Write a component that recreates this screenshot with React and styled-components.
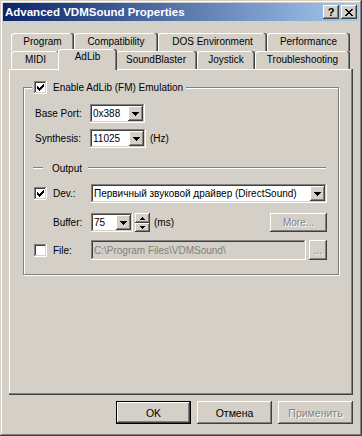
import React from 'react';
import styled, { createGlobalStyle } from 'styled-components';

const face = '#d4d0c8';

const GlobalStyle = createGlobalStyle`
  html, body {
    margin: 0;
    padding: 0;
    background: ${face};
  }
  body {
    font-family: "Liberation Sans", Arial, sans-serif;
    font-size: 10px;
    color: #000;
  }
  * {
    box-sizing: border-box;
  }
`;

const raised = `
  background: ${face};
  box-shadow: inset -1px -1px 0 #404040, inset 1px 1px 0 #fff, inset -2px -2px 0 #808080, inset 2px 2px 0 ${face};
`;

const sunken = `
  box-shadow: inset -1px -1px 0 #fff, inset 1px 1px 0 #808080, inset -2px -2px 0 ${face}, inset 2px 2px 0 #404040;
`;

const row1 = [
  ['Program', 63],
  ['Compatibility', 84],
  ['DOS Environment', 109],
  ['Performance', 83],
];

const row2 = [
  ['MIDI', 49],
  ['AdLib', 55, true],
  ['SoundBlaster', 82],
  ['Joystick', 58],
  ['Troubleshooting', 95],
];

const CheckMark = () => (
  <svg width="7" height="7" viewBox="0 0 7 7">
    <path d="M0 2h1v1h1v1h1V3h1V2h1V1h1V0h1v3H6v1H5v1H4v1H3v1H2V6H1V5H0z" fill="#000" />
  </svg>
);

const ArrowDown = () => (
  <svg width="7" height="4" viewBox="0 0 7 4">
    <path d="M0 0h7v1H6v1H5v1H4v1H3V3H2V2H1V1H0z" fill="#000" />
  </svg>
);

const SpinUp = () => (
  <svg width="5" height="3" viewBox="0 0 5 3">
    <path d="M2 0h1v1h1v1h1v1H0V2h1V1h1z" fill="#000" />
  </svg>
);

const SpinDown = () => (
  <svg width="5" height="3" viewBox="0 0 5 3">
    <path d="M0 0h5v1H4v1H3v1H2V2H1V1H0z" fill="#000" />
  </svg>
);

const CloseGlyph = () => (
  <svg width="8" height="7" viewBox="0 0 8 7">
    <path
      d="M0 0h2v1H0z M6 0h2v1H6z M1 1h2v1H1z M5 1h2v1H5z M2 2h4v1H2z M3 3h2v1H3z M2 4h4v1H2z M1 5h2v1H1z M5 5h2v1H5z M0 6h2v1H0z M6 6h2v1H6z"
      fill="#000"
    />
  </svg>
);

const Checkbox = ({ checked }) => <CheckBoxBox>{checked && <CheckMark />}</CheckBoxBox>;

const Combo = ({ width, value }) => (
  <ComboBox $w={width}>
    <ComboText>{value}</ComboText>
    <DropButton>
      <ArrowDown />
    </DropButton>
  </ComboBox>
);

const App = () => {
  return (
    <>
      <GlobalStyle />
      <Window>
        <TitleBar>
          <Title>Advanced VDMSound Properties</Title>
          <CaptionButtons>
            <CaptionButton>?</CaptionButton>
            <CaptionButton>
              <CloseGlyph />
            </CaptionButton>
          </CaptionButtons>
        </TitleBar>

        <Body>
          <TabRow>
            {row1.map(([label, w]) => (
              <Tab key={label} $w={w}>{label}</Tab>
            ))}
          </TabRow>
          <TabRow>
            {row2.map(([label, w, selected]) => (
              <Tab key={label} $w={w} $selected={selected}>{label}</Tab>
            ))}
          </TabRow>

          <Panel>
            <Group>
              <GroupTitle>
                <Checkbox checked />
                <span>Enable AdLib (FM) Emulation</span>
              </GroupTitle>

              <FormRow $mt={10}>
                <FieldLabel>Base Port:</FieldLabel>
                <Combo width={55} value="0x388" />
              </FormRow>
              <FormRow $mt={6}>
                <FieldLabel>Synthesis:</FieldLabel>
                <Combo width={56} value="11025" />
                <Unit>(Hz)</Unit>
              </FormRow>

              <SepRow>
                <SepLine $w={10} />
                <SepText>Output</SepText>
                <SepLine />
              </SepRow>

              <OutRow $mt={9} $h={19}>
                <Checkbox checked />
                <span>Dev.:</span>
                <Combo width={236} value="Первичный звуковой драйвер (DirectSound)" />
              </OutRow>
              <OutRow $mt={10} $h={19}>
                <span />
                <span>Buffer:</span>
                <ControlLine>
                  <Combo width={42} value="75" />
                  <Spinner>
                    <SpinButton><SpinUp /></SpinButton>
                    <SpinButton><SpinDown /></SpinButton>
                  </Spinner>
                  <Unit>(ms)</Unit>
                  <SmallButton $w={57} disabled>More...</SmallButton>
                </ControlLine>
              </OutRow>
              <OutRow $mt={8} $h={20}>
                <Checkbox />
                <span>File:</span>
                <ControlLine>
                  <TextBox>C:\Program Files\VDMSound\</TextBox>
                  <SmallButton $w={18} disabled>...</SmallButton>
                </ControlLine>
              </OutRow>
            </Group>
          </Panel>

          <ButtonRow>
            <PushButton $default>OK</PushButton>
            <PushButton>Отмена</PushButton>
            <PushButton disabled>Применить</PushButton>
          </ButtonRow>
        </Body>
      </Window>
    </>
  );
};

const Window = styled.div`
  width: 362px;
  height: 436px;
  padding: 3px;
  background: ${face};
  box-shadow: inset -1px -1px 0 #404040, inset 1px 1px 0 ${face}, inset -2px -2px 0 #808080, inset 2px 2px 0 #fff;
  display: flex;
  flex-direction: column;
`;

const TitleBar = styled.div`
  height: 18px;
  display: flex;
  align-items: center;
  padding: 0 2px;
  background: linear-gradient(to right, #0a246a, #a6caf0);
`;

const Title = styled.div`
  flex: 1;
  color: #fff;
  font-weight: bold;
  font-size: 11.5px;
  white-space: nowrap;
`;

const CaptionButtons = styled.div`
  display: flex;
  gap: 2px;
`;

const CaptionButton = styled.div`
  ${raised}
  width: 16px;
  height: 14px;
  display: flex;
  align-items: center;
  justify-content: center;
  font-weight: bold;
  font-size: 11px;
  line-height: 1;
`;

const Body = styled.div`
  padding: 12px 6px 0;
  display: flex;
  flex-direction: column;
`;

const TabRow = styled.div`
  display: flex;
  height: 18px;
  padding-left: 2px;
`;

const Tab = styled.div`
  flex: none;
  position: relative;
  width: ${(p) => (p.$selected ? p.$w + 4 : p.$w)}px;
  height: ${(p) => (p.$selected ? 21 : 18)}px;
  margin: ${(p) => (p.$selected ? '-2px -2px 0' : '0')};
  z-index: ${(p) => (p.$selected ? 2 : 1)};
  line-height: ${(p) => (p.$selected ? 16 : 18)}px;
  text-align: center;
  white-space: nowrap;
  background: ${face};
  border-radius: 3px 3px 0 0;
  box-shadow: inset -1px 0 0 #404040, inset -2px 0 0 #808080, inset 1px 1px 0 #fff;
`;

const Panel = styled.div`
  height: 326px;
  padding: 18px 0 0 14px;
  box-shadow: inset -1px -1px 0 #404040, inset -2px -2px 0 #808080, inset 1px 1px 0 #fff;
`;

const Group = styled.div`
  width: 316px;
  border: 1px solid #808080;
  box-shadow: inset 1px 1px 0 #fff, 1px 1px 0 #fff;
  display: flex;
  flex-direction: column;
  padding-bottom: 14px;
`;

const GroupTitle = styled.div`
  align-self: flex-start;
  height: 14px;
  margin: -8px 0 0 8px;
  padding: 0 3px 0 2px;
  background: ${face};
  display: flex;
  align-items: center;
  gap: 6px;
  white-space: nowrap;
`;

const CheckBoxBox = styled.span`
  flex: none;
  width: 13px;
  height: 13px;
  background: #fff;
  ${sunken}
  display: inline-flex;
  align-items: center;
  justify-content: center;
`;

const FormRow = styled.div`
  display: flex;
  align-items: center;
  height: 19px;
  margin-top: ${(p) => p.$mt}px;
  padding-left: 11px;
`;

const FieldLabel = styled.span`
  width: 55px;
  flex: none;
`;

const ComboBox = styled.div`
  flex: none;
  width: ${(p) => p.$w}px;
  height: 19px;
  background: #fff;
  ${sunken}
  display: flex;
  align-items: center;
  padding: 2px;
`;

const ComboText = styled.span`
  flex: 1;
  min-width: 0;
  padding-left: 1px;
  overflow: hidden;
  white-space: nowrap;
`;

const DropButton = styled.span`
  ${raised}
  flex: none;
  width: 15px;
  height: 15px;
  display: flex;
  align-items: center;
  justify-content: center;
`;

const Unit = styled.span`
  margin-left: 4px;
`;

const SepRow = styled.div`
  display: flex;
  align-items: center;
  height: 14px;
  margin-top: 13px;
  padding: 0 12px 0 9px;
  gap: 0;
`;

const SepLine = styled.span`
  height: 2px;
  border-top: 1px solid #808080;
  border-bottom: 1px solid #fff;
  ${(p) => (p.$w ? `width: ${p.$w}px; flex: none;` : 'flex: 1;')}
`;

const SepText = styled.span`
  margin: 0 6px 0 9px;
`;

const OutRow = styled.div`
  display: grid;
  grid-template-columns: 13px 32px 1fr;
  column-gap: 6px;
  align-items: center;
  height: ${(p) => p.$h}px;
  margin-top: ${(p) => p.$mt}px;
  padding: 0 11px 0 10px;
`;

const ControlLine = styled.div`
  display: flex;
  align-items: center;
  height: 100%;
`;

const Spinner = styled.div`
  flex: none;
  width: 15px;
  height: 19px;
  margin-left: 2px;
  display: grid;
  grid-template-rows: 10px 9px;
`;

const SpinButton = styled.span`
  ${raised}
  display: flex;
  align-items: center;
  justify-content: center;
`;

const SmallButton = styled.button`
  ${raised}
  width: ${(p) => p.$w}px;
  height: 100%;
  margin-left: auto;
  border: none;
  padding: 0;
  font: inherit;
  color: ${(p) => (p.disabled ? '#808080' : '#000')};
  text-shadow: ${(p) => (p.disabled ? '1px 1px 0 #fff' : 'none')};
`;

const TextBox = styled.div`
  width: 215px;
  height: 20px;
  background: ${face};
  ${sunken}
  padding: 0 3px;
  display: flex;
  align-items: center;
  color: #808080;
  white-space: nowrap;
  overflow: hidden;
`;

const ButtonRow = styled.div`
  display: flex;
  justify-content: flex-end;
  gap: 6px;
  margin-top: 6px;
`;

const PushButton = styled.button`
  ${raised}
  width: 75px;
  height: 23px;
  padding: 0;
  font: inherit;
  font-size: 10.5px;
  border: ${(p) => (p.$default ? '1px solid #000' : 'none')};
  color: ${(p) => (p.disabled ? '#808080' : '#000')};
  text-shadow: ${(p) => (p.disabled ? '1px 1px 0 #fff' : 'none')};
`;

export default App;
